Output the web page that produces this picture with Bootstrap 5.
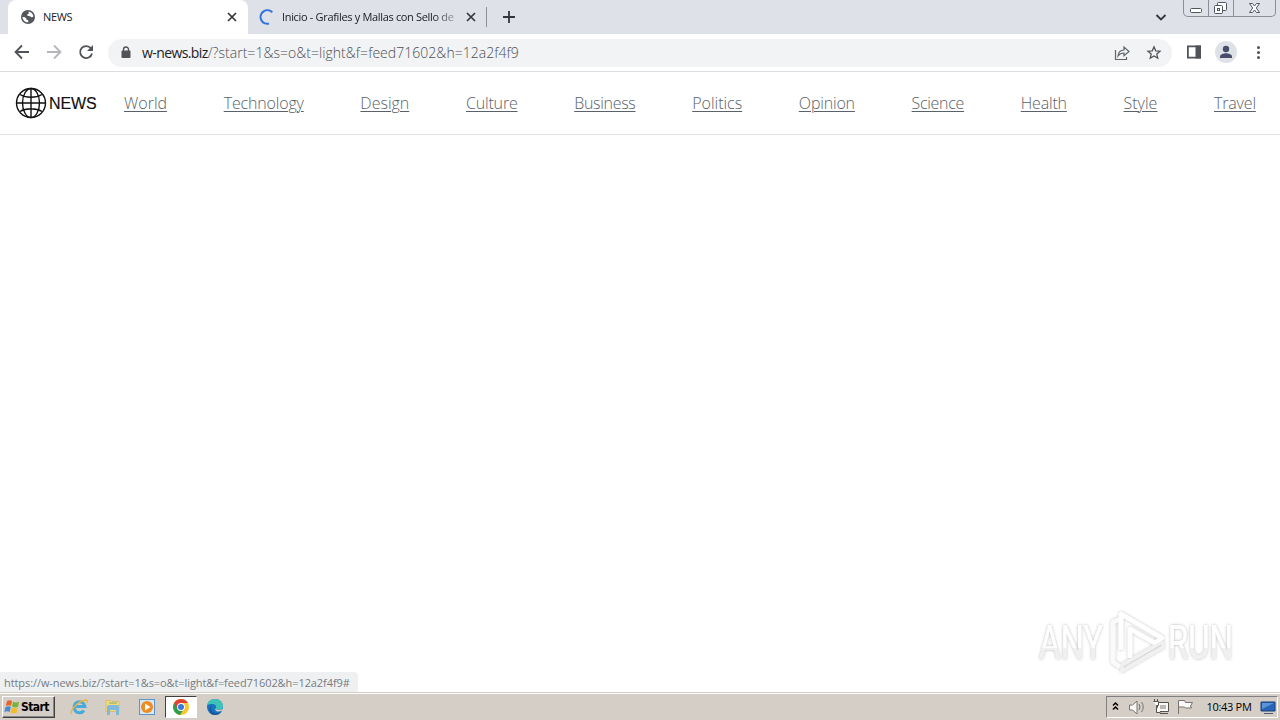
<!DOCTYPE html>
<html lang="en">
<head>
<meta charset="utf-8">
<title>NEWS</title>
<link href="https://cdn.jsdelivr.net/npm/bootstrap@5.3.0/dist/css/bootstrap.min.css" rel="stylesheet">
<style>
body{width:1280px;height:720px;overflow:hidden;background:#fff;font-family:"Open Sans","Noto Sans",sans-serif;color:#202124}
svg{display:block;flex:none}
.t{white-space:nowrap;flex:none}
.tabs-strip{height:34px;background:#dee1e8;padding-left:8px}
.tab-on{width:240px;height:34px;background:#fff;border-radius:8px 8px 0 0;padding:0 10px 0 12px}
.tab-off{width:238px;height:34px;padding:0 9px 0 10px}
.tab-text{font-size:11px;line-height:34px}
.fade-end{-webkit-mask-image:linear-gradient(90deg,#000 88%,rgba(0,0,0,.35))}
.sep{width:1px;height:20px;background:#8c8f96}
.caption-btns{height:17px;width:93px;margin-right:4px;border:1px solid #8b8e96;border-top:0;border-radius:0 0 5px 5px}
.caption-btns>span+span{border-left:1px solid #8b8e96}
.toolbar{height:38px;border-bottom:1px solid #dadce0}
.omni{height:28px;width:1064px;border-radius:14px;background:#f1f3f5;margin-left:13px;padding:0 10px 0 10px}
.url{font-size:14px;line-height:28px;font-weight:300;color:#4d5156}
.url b{font-weight:400;color:#202124;letter-spacing:-.6px}
.url span{letter-spacing:.04px}
.site{height:63px;border-bottom:1px solid #dfe2e5;padding:0 24px 0 15px}
.brand-name{font:16px/30px "Liberation Sans",sans-serif;color:#111;-webkit-text-stroke:.15px #111;width:49px;letter-spacing:-.1px;padding-top:1px}
.site a{font-size:16px;font-weight:300;color:#59626a;line-height:24px;text-decoration:underline;text-underline-offset:2px;text-decoration-thickness:1px;letter-spacing:-.17px}
.site a.even{letter-spacing:0}
.status{height:20px;width:358px;background:#eef0f2;border-radius:0 4px 0 0;padding-left:4px;font-size:11px;line-height:21px;color:#777b80;letter-spacing:-.08px}
.taskbar{height:28px;background:#d5cec6;border-top:1px solid #d5cec6;box-shadow:inset 0 1px #fff;padding:3px 2px 0 2px}
.start{width:53px;height:22px;background:#d5cec6;border:1px solid;border-color:#fff #404040 #404040 #fff;box-shadow:inset -1px -1px #888;font:bold 12px/20px "DejaVu Sans Condensed","DejaVu Sans",sans-serif;color:#000;padding-left:1px}
.task-on{width:32px;height:22px;background:#fff;border:1px solid;border-color:#404040 #fff #fff #404040}
.tray{height:22px;width:172px;border:1px solid;border-color:#808080 #fff #fff #808080}
.clock{font-size:11px;color:#000;line-height:20px}
.mark-any{left:1031px;top:604px}
</style>
</head>
<body class="d-flex flex-column position-relative">
<header class="tabs-strip d-flex align-items-center flex-shrink-0">
  <div class="tab-on d-flex align-items-center">
    <svg width="16" height="16" viewBox="0 0 16 16"><circle cx="8" cy="8" r="7" fill="#53565b"/><path d="M2.500 8c2 0 3 .3 3.600 1.300.5.900 0 1.500 1.300 1.700 1.400.2.800 1.300.8 2.400-3.200 0-5.500-2.200-5.700-5.400zM8 2.700c2.800-.3 5.200 2 5.400 4.900-1 .9-1.800 1-2.600.2-.6-.7-1.300-.9-2.300-.8-.9.1-1.600-.5-1.200-1.400.3-.7 1.400-.5 1.600-1.300.2-.7-.3-1-.9-1.600z" fill="#fff"/></svg>
    <span class="t tab-text" style="letter-spacing:-.35px;margin-left:7px">NEWS</span>
    <svg class="ms-auto" width="12" height="12"><path d="M2 2l8 8M10 2l-8 8" stroke="#33363a" stroke-width="1.700"/></svg>
  </div>
  <div class="tab-off d-flex align-items-center">
    <svg width="17" height="16"><path d="M14.300 3.300A6.800 6.800 0 1 0 11 14.600" fill="none" stroke="#2f73dc" stroke-width="2"/></svg>
    <span class="t tab-text fade-end" style="letter-spacing:-.33px;margin-left:7px">Inicio - Grafiles y Mallas con Sello de</span>
    <svg class="ms-auto" width="12" height="12"><path d="M2 2l8 8M10 2l-8 8" stroke="#33363a" stroke-width="1.700"/></svg>
  </div>
  <div class="sep"></div>
  <svg class="ms-3" width="12" height="12"><path d="M6 0v12M0 6h12" stroke="#33363a" stroke-width="1.800"/></svg>
  <svg class="ms-auto me-3" width="12" height="12"><path d="M1.500 4l4.500 4.500L10.500 4" fill="none" stroke="#33363a" stroke-width="1.800"/></svg>
  <div class="caption-btns d-flex align-self-start">
    <span style="width:24px"><svg width="23" height="16"><rect x="6.500" y="8.500" width="11" height="4" rx="1" fill="#fff" stroke="#505560"/></svg></span>
    <span style="width:25px"><svg width="24" height="16"><rect x="8.500" y="2.500" width="9" height="8" rx="1" fill="#fff" stroke="#505560"/><rect x="5.500" y="5.500" width="8" height="8" rx="1" fill="#fff" stroke="#505560"/><rect x="8.500" y="8.500" width="2" height="2" fill="none" stroke="#505560"/></svg></span>
    <span style="width:42px"><svg width="40" height="16"><path d="M15.500 3.500h3l2 2.500 2-2.500h3l-3.200 4.500 3.200 4.500h-3l-2-2.500-2 2.500h-3l3.200-4.500z" fill="#fff" stroke="#505560"/></svg></span>
  </div>
</header>

<div class="toolbar d-flex align-items-center flex-shrink-0">
  <svg width="95" height="37"><g fill="none" stroke-width="1.800"><path d="M29 18H15.500M22 11.500L15.500 18l6.500 6.500" stroke="#505357"/><path d="M47 18h13.500M54 11.500l6.500 6.500-6.500 6.500" stroke="#b4b6b9"/><path d="M91 14.500A6 6 0 1 0 92 19.500" stroke="#505357"/></g><path d="M93 11v6h-6z" fill="#505357"/></svg>
  <div class="omni d-flex align-items-center">
    <svg width="16" height="16"><rect x="3.500" y="5.500" width="9" height="7.500" rx="1" fill="#505357"/><path d="M5.500 7V4.500a2.500 2.500 0 0 1 5 0V7" fill="none" stroke="#505357" stroke-width="1.400"/></svg>
    <span class="t url ms-2"><b>w-news.biz</b><span>/?start=1&amp;s=o&amp;t=light&amp;f=feed71602&amp;h=12a2f4f9</span></span>
    <svg class="ms-auto" width="18" height="18"><path d="M1.500 6v9.500h11V13M4 12c.3-4 2.500-5.800 6-6V3l5 4.500-5 4.200V9C7.300 9 5.500 9.800 4 12z" fill="none" stroke="#606469" stroke-width="1.200"/></svg>
    <svg width="16" height="16" style="margin-left:14px"><path d="M8 1.500l1.900 4.400 4.800.4-3.600 3.200 1.100 4.700L8 11.700l-4.200 2.500 1.100-4.700-3.600-3.200 4.800-.4z" fill="none" stroke="#505357" stroke-width="1.400" transform="translate(.8 .5) scale(.9)"/></svg>
  </div>
  <svg width="108" height="37"><path d="M15.900 12.400h12.200v11.200H15.900z" fill="#fff" stroke="#505357" stroke-width="1.800"/><path d="M23.500 11.500h5.500v13h-5.500z" fill="#505357"/><circle cx="54" cy="18" r="11" fill="#dee1e6"/><circle cx="54" cy="15" r="3.200" fill="#474d69"/><path d="M48 24v-1.500c0-2.300 4-3.200 6-3.200s6 .9 6 3.200V24z" fill="#474d69"/><g fill="#505357"><circle cx="86.500" cy="13.500" r="1.500"/><circle cx="86.500" cy="18.500" r="1.500"/><circle cx="86.500" cy="23.500" r="1.500"/></g></svg>
</div>

<nav class="site d-flex align-items-center flex-shrink-0">
  <svg width="32" height="32" viewBox="0 0 32 32"><g fill="none" stroke="#111" stroke-width="1.400"><circle cx="16" cy="16" r="14.500"/><ellipse cx="16" cy="16" rx="8.500" ry="14.500"/><path d="M16 1.500v29M1.500 16h29M5 7.500c6 3.700 16 3.700 22 0M5 24.500c6-3.700 16-3.700 22 0"/></g></svg>
  <span class="t brand-name" style="margin-left:2px">NEWS</span>
  <div class="d-flex justify-content-between flex-grow-1" style="margin-left:26px">
    <a class="t even" href="#">World</a><a class="t" href="#">Technology</a><a class="t even" href="#">Design</a><a class="t" href="#">Culture</a><a class="t" style="letter-spacing:-.3px" href="#">Business</a><a class="t even" href="#">Politics</a><a class="t" href="#">Opinion</a><a class="t" style="letter-spacing:-.3px" href="#">Science</a><a class="t" href="#">Health</a><a class="t even" href="#">Style</a><a class="t" href="#">Travel</a>
  </div>
</nav>

<main class="flex-grow-1 d-flex align-items-end"><div class="status t">https://w-news.biz/?start=1&amp;s=o&amp;t=light&amp;f=feed71602&amp;h=12a2f4f9#</div></main>

<svg class="mark-any position-absolute" width="220" height="76" viewBox="0 0 220 76">
  <defs><filter id="sh" x="-10%" y="-20%" width="120%" height="140%"><feDropShadow dx="0" dy="0" stdDeviation="1.700" flood-color="#000" flood-opacity=".3"/></filter>
  <linearGradient id="lg" x2="0" y2="1"><stop offset=".6" stop-color="#fff"/><stop offset=".6" stop-color="#f0f0f0"/></linearGradient></defs>
  <g filter="url(#sh)" fill="url(#lg)" font-family="Roboto,sans-serif" font-size="49">
    <text x="8" y="55" textLength="64" lengthAdjust="spacingAndGlyphs">ANY</text>
    <text x="137" y="55" textLength="65" lengthAdjust="spacingAndGlyphs">RUN</text>
  </g>
  <g filter="url(#sh)" fill="none" stroke-linejoin="round" stroke-width="4.500"><path d="M90 21v-6l-8 3v40l7 5" stroke="#fafafa"/><path d="M90 46V10l41 24-7 5-25-14v29" stroke="#fff"/><path d="M131 38l-40 23v6l41-24z" stroke="#f1f1f1" stroke-width="3"/></g>
</svg>

<footer class="taskbar d-flex flex-shrink-0">
  <div class="start d-flex align-items-center"><svg width="17" height="16"><path d="M3 2q3-1.500 5 .3L7 7Q5 5.500 1.800 7z" fill="#e8632a"/><path d="M9 2.800q3 1.500 6 0L14 8q-3 1-6-.5z" fill="#78b33b"/><path d="M1.500 8Q5 6.500 6.800 8L5.600 13Q3 11.700.3 13z" fill="#468bd4"/><path d="M7.800 8.600q3 1.500 6 .3l-1.300 5q-3 1-6-.5z" fill="#f4bd28"/></svg><span class="t" style="letter-spacing:-.6px">Start</span></div>
  <svg width="110" height="22"><g fill="none" transform="translate(-1.500)"><path d="M30.500 14.500a5.500 5.500 0 1 1 1-4H21" stroke="#48a9dd" stroke-width="3"/><path d="M18 18c-3-2 7-14 15-14 1 0 1 2 0 3" stroke="#e5b63f" stroke-width="1.300"/></g>
    <path d="M51 4.500h5l1 1h7v10H51z" fill="#f3d982" stroke="#d4b45a" stroke-width=".7"/><path d="M52 11q0-2 2-2h8q2 0 2 2v8h-3v-5h-6v5h-3z" fill="#7db9da"/><path d="M54 7h8" stroke="#79b16f"/>
    <rect x="84.500" y="3.500" width="15" height="15" fill="#d6e7f5" stroke="#5d94c4"/><circle cx="92" cy="11" r="6" fill="#ef8b20"/><path d="M90 7.500v7l5.500-3.500z" fill="#fff"/></svg>
  <div class="task-on d-flex align-items-center justify-content-center"><svg width="16" height="16" viewBox="0 0 16 16"><circle cx="8" cy="8" r="8" fill="#f7c72d"/><path d="M8 8L1.100 4A8 8 0 0 0 7 15.900L11 9.700z" fill="#2e9d4b"/><path d="M1.100 4A8 8 0 0 1 14.900 4H8L4.700 10z" fill="#df4235"/><circle cx="8" cy="8" r="3.900" fill="#fff"/><circle cx="8" cy="8" r="3" fill="#3875dc"/></svg></div>
  <svg width="36" height="22"><circle cx="18" cy="11" r="8" fill="#1972bd"/><path d="M10.200 9C11 5 14 3 18 3c5 0 8 3.500 8 7 0 2.500-2 4-4.500 4-2 0-3-.8-2.500-2 .8-2-1-4-3.500-4-2 0-4 .3-5.300 1z" fill="#3fc2b8"/><path d="M15 9c-3 3 0 8 4 8 2 0 4-.4 5.500-1.500 0 0-2 3.500-6.500 3.500-7 0-7-8-3-10z" fill="#155a9f"/><path d="M19 12c-.5 1.200.5 2 2.500 2 1.500 0 3-.4 5-1.200-.5 2-3.500 3.200-6 2.700-2-.5-3-2.500-1.500-3.500z" fill="#d5cec6"/></svg>
  <div class="tray ms-auto d-flex align-items-center">
    <svg width="99" height="20"><path d="M6 8.500L8.500 6l2.500 2.500M6 12.500l2.500-2.500 2.500 2.500" fill="none" stroke="#000" stroke-width="1.500"/><g stroke="#77746f" fill="#faf9f7"><path d="M22.500 8h3l4.500-4v13l-4.500-4h-3z"/><path d="M32 7q2 3 0 6M34.500 5q3.500 5 0 10" fill="none"/><path d="M50.500 5.500h11v9h-11z" stroke="#55524e"/><path d="M53 8h6v4h-6z" fill="#bbb7b1" stroke="none"/><path d="M53 16.500h8" stroke="#55524e"/><path d="M46.500 4.500h5v4h-2v7h4M47.500 2v2.500M50.500 2v2.500" stroke="#55524e"/><path d="M71.500 17V3.500h6l1 2h7l-2 3.500 1 2h-6l-1-1h-6"/></g></svg>
    <span class="t clock" style="letter-spacing:-.3px;margin-left:.5px">10:43 PM</span>
    <svg class="ms-auto" width="18" height="18"><path d="M2 4h14v9H2z" fill="#2864b8" stroke="#173f78"/><path d="M3 5h12L3 11z" fill="#5a95dc"/><path d="M5 15.500h9" stroke="#465b79"/></svg>
  </div>
</footer>
<script src="https://cdn.jsdelivr.net/npm/bootstrap@5.3.0/dist/js/bootstrap.bundle.min.js"></script>
</body>
</html>
